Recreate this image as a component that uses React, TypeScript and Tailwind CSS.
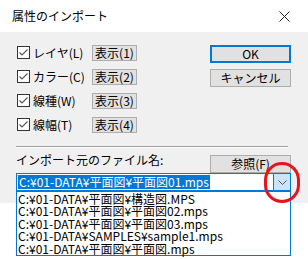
import React from 'react';

const font = "font-['Noto_Sans_CJK_JP',sans-serif]";

function Check() {
  return (
    <span className="flex h-[13px] w-[13px] shrink-0 items-center justify-center border border-[#333333] bg-white">
      <svg width="11" height="11" viewBox="0 0 11 11">
        <path d="M1.5 5.5 L4 8 L9.5 2.5" fill="none" stroke="#555555" strokeWidth="1.1" />
      </svg>
    </span>
  );
}

const rows = [
  { label: 'レイヤ(L)', btn: '表示(1)' },
  { label: 'カラー(C)', btn: '表示(2)' },
  { label: '線種(W)', btn: '表示(3)' },
  { label: '線幅(T)', btn: '表示(4)' },
];

const files = [
  'C:¥01-DATA¥平面図¥構造図.MPS',
  'C:¥01-DATA¥平面図¥平面図02.mps',
  'C:¥01-DATA¥平面図¥平面図03.mps',
  'C:¥01-DATA¥SAMPLES¥sample1.mps',
  'C:¥01-DATA¥平面図¥平面図.mps',
];

export default function App() {
  return (
    <div className={`relative h-[259px] w-[308px] overflow-hidden bg-white text-black ${font}`}>
      <div className="flex h-[203px] flex-col bg-[#f0f0f0]">
        {/* title bar */}
        <div className="flex h-[32px] shrink-0 items-center justify-between bg-white pl-[12px] pr-[18px]">
          <span className="text-[12px] leading-none">属性のインポート</span>
          <svg width="11" height="11" viewBox="0 0 11 11">
            <path d="M0.5 0.5 L10.5 10.5 M10.5 0.5 L0.5 10.5" stroke="#222222" strokeWidth="1" />
          </svg>
        </div>

        <div className="flex flex-col px-[16px]">
          {/* options + OK/cancel */}
          <div className="flex h-[114px] shrink-0 justify-between pt-[14px]">
            <div className="flex flex-col pl-[1px]">
              {rows.map((r) => (
                <div key={r.label} className="flex h-[24px] shrink-0 items-start">
                  <Check />
                  <span className="ml-[3px] w-[59px] whitespace-nowrap text-[12px] leading-[13px]">{r.label}</span>
                  <span className="-mt-[1px] flex h-[16px] w-[45px] items-center justify-center border border-[#adadad] bg-[#e1e1e1] text-[12px] leading-none">
                    {r.btn}
                  </span>
                </div>
              ))}
            </div>
            <div className="-mt-[1px] mr-[1px] flex flex-col gap-[6px]">
              <span className="flex h-[18px] w-[81px] items-center justify-center border-2 border-[#0078d7] bg-[#e1e1e1] text-[12px] leading-none">
                OK
              </span>
              <span className="flex h-[18px] w-[81px] items-center justify-center border border-[#adadad] bg-[#e1e1e1] text-[12px] leading-none">
                キャンセル
              </span>
            </div>
          </div>

          <div className="h-[2px] w-[272px] shrink-0 border-b border-t border-b-white border-t-[#a0a0a0]" />

          {/* label + browse */}
          <div className="flex h-[25px] shrink-0 items-end justify-between">
            <span className="whitespace-nowrap pb-[7px] text-[12px] leading-none">インポート元のファイル名:</span>
            <span className="mr-[1px] flex h-[18px] w-[81px] items-center justify-center border border-[#adadad] bg-[#e1e1e1] text-[12px] leading-none">
              参照(F)
            </span>
          </div>

          {/* combo */}
          <div className="relative flex h-[18px] w-[275px] shrink-0 border border-[#0078d7] bg-white">
            <div className="flex flex-1 items-center pl-[1px]">
              <span className="whitespace-nowrap bg-[#0078d7] px-[1px] text-[12px] leading-[14px] text-white">
                C:¥01-DATA¥平面図¥平面図01.mps
              </span>
            </div>
            <div className="flex w-[17px] items-center justify-center border-l border-[#0078d7] bg-[#cce4f7]">
              <svg width="9" height="5" viewBox="0 0 9 5">
                <path d="M0.5 0.5 L4.5 4.5 L8.5 0.5" fill="none" stroke="#555555" strokeWidth="1" />
              </svg>
            </div>
            {/* dropdown list */}
            <div className="absolute left-[-1px] top-[17px] flex h-[65px] w-[275px] flex-col border border-[#0078d7] bg-white pt-[1px]">
              {files.map((f) => (
                <div key={f} className="h-[12.4px] shrink-0 whitespace-nowrap pl-[1px] text-[12px] leading-[12.4px]">
                  {f}
                </div>
              ))}
            </div>
          </div>
        </div>
      </div>

      {/* annotation */}
      <div className="absolute left-[264px] top-[162px] h-[41px] w-[36px] rounded-full border-[3px] border-[#e8141c]" />
    </div>
  );
}
